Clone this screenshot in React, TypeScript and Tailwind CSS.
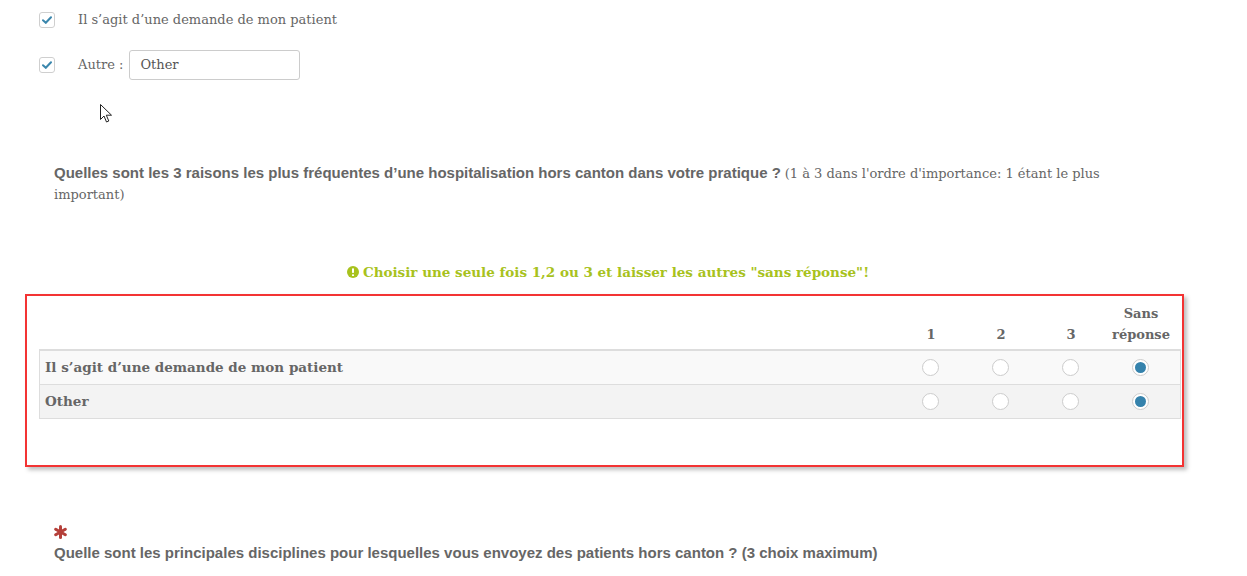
import React from "react";

const serif = "font-['DejaVu_Serif',serif]";
const sans = "font-['Liberation_Sans',Arial,sans-serif]";

function CheckBox() {
  return (
    <span className="flex h-[16px] w-[16px] items-center justify-center rounded-[3px] border border-[#cfcfcf] bg-white">
      <svg width="10" height="8" viewBox="0 0 10 8">
        <path d="M1 4.2 L3.8 6.8 L9 1.2" fill="none" stroke="#3b87ad" strokeWidth="2" strokeLinecap="round" />
      </svg>
    </span>
  );
}

function Radio({ checked }: { checked?: boolean }) {
  return (
    <span className="mx-auto flex h-[17px] w-[17px] items-center justify-center rounded-full border border-[#cccccc] bg-white">
      {checked && <span className="h-[11px] w-[11px] rounded-full bg-[#3582ac]" />}
    </span>
  );
}

const rows = [
  { label: "Il s’agit d’une demande de mon patient", bg: "bg-[#f9f9f9]" },
  { label: "Other", bg: "bg-[#f3f3f3]" },
];

export default function App() {
  return (
    <div className="relative min-h-[576px] w-[1247px] bg-white text-[#666]">
      {/* choices from the previous question */}
      <div className="pl-[39px] pt-[12px]">
        <div className="flex h-[16px] items-center gap-[23px]">
          <CheckBox />
          <span className={`${serif} text-[13px] leading-[16px]`}>Il s’agit d’une demande de mon patient</span>
        </div>
        <div className="mt-[22px] flex h-[30px] items-center">
          <CheckBox />
          <span className={`${serif} ml-[23px] text-[13px]`}>Autre :</span>
          <span className={`${serif} ml-[6px] flex h-[30px] w-[171px] items-center rounded-[3px] border border-[#cccccc] pl-[10px] text-[13px] text-[#555]`}>
            Other
          </span>
        </div>
      </div>

      {/* mouse pointer */}
      <svg className="absolute left-[100px] top-[104px]" width="13" height="20" viewBox="0 0 13 20">
        <path d="M0.5 0.5 L0.5 15.5 L4 12 L6.5 18 L8.8 17 L6.3 11.2 L11.5 11.2 Z" fill="white" stroke="#222" strokeWidth="1" strokeLinejoin="round" />
      </svg>

      <div className="ml-[54px] mt-[82px] h-[40px] w-[1050px] text-[15px] leading-[20px]">
        <span className={`${sans} font-bold`}>
          Quelles sont les 3 raisons les plus fréquentes d’une hospitalisation hors canton dans votre pratique ?
        </span>{" "}
        <span className={`${serif} text-[13px] leading-[16px]`}>(1 à 3 dans l'ordre d'importance: 1 étant le plus</span>
        <br />
        <span className={`${serif} text-[13px] leading-[16px]`}>important)</span>
      </div>

      <div className={`${serif} mt-[60px] flex h-[20px] w-[1216px] items-center justify-center gap-[4px] text-[13.5px] font-bold text-[#a8c21d]`}>
        <svg width="12" height="12" viewBox="0 0 12 12">
          <circle cx="6" cy="6" r="6" fill="#a8c21d" />
          <rect x="5" y="2.3" width="2" height="4.8" rx="0.8" fill="white" />
          <rect x="5" y="8.2" width="2" height="1.8" rx="0.5" fill="white" />
        </svg>
        <span>Choisir une seule fois 1,2 ou 3 et laisser les autres "sans réponse"!</span>
      </div>

      {/* highlighted matrix */}
      <div className="ml-[25px] mt-[12px] h-[173px] w-[1159px] border-2 border-[#f33333] pl-[12px] pr-[1px] shadow-[3px_3px_4px_rgba(0,0,0,0.25)]">
        <div className={`${serif} flex border-b-2 border-[#dddddd] pb-[4px] pr-[5px] pt-[7px] text-[13px] font-bold leading-[21px]`}>
          <div className="flex-1" />
          <div className="flex w-[70px] items-end justify-center">1</div>
          <div className="flex w-[70px] items-end justify-center">2</div>
          <div className="flex w-[70px] items-end justify-center">3</div>
          <div className="w-[70px] text-center">
            Sans
            <br />
            réponse
          </div>
        </div>
        {rows.map((r) => (
          <div
            key={r.label}
            className={`${serif} ${r.bg} flex h-[34px] items-center border-x border-b border-[#dddddd] pr-[5px] text-[13.5px] font-bold`}
          >
            <div className="flex-1 pl-[5px]">{r.label}</div>
            <div className="w-[70px]"><Radio /></div>
            <div className="w-[70px]"><Radio /></div>
            <div className="w-[70px]"><Radio /></div>
            <div className="w-[70px]"><Radio checked /></div>
          </div>
        ))}
      </div>

      <div className="ml-[54px] mt-[58px]">
        <svg width="13" height="14" viewBox="0 0 13 14">
          <g stroke="#b5403a" strokeWidth="3" strokeLinecap="round">
            <line x1="6.5" y1="1.5" x2="6.5" y2="12.5" />
            <line x1="1.7" y1="4.2" x2="11.3" y2="9.8" />
            <line x1="1.7" y1="9.8" x2="11.3" y2="4.2" />
          </g>
        </svg>
        <div className={`${sans} mt-[4px] text-[15px] font-bold leading-[20px]`}>
          Quelle sont les principales disciplines pour lesquelles vous envoyez des patients hors canton ? (3 choix maximum)
        </div>
      </div>
    </div>
  );
}
